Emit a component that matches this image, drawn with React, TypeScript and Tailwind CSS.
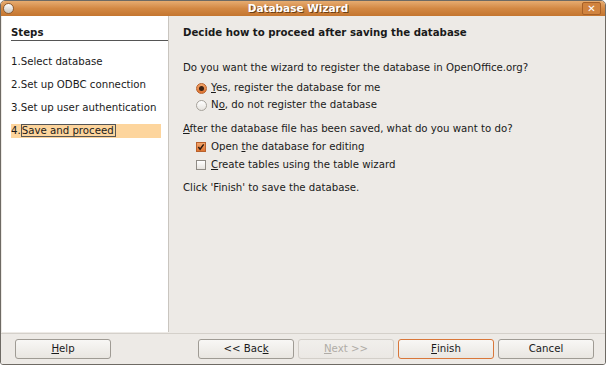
import React from 'react';

const font = { fontFamily: '"DejaVu Sans", sans-serif' };

function Radio({ checked }: { checked?: boolean }) {
    return (
        <span
            className={`inline-flex items-center justify-center w-[11px] h-[11px] rounded-full border shrink-0 ${
                checked
                    ? 'border-[#b8612c] bg-gradient-to-b from-[#f3a56a] to-[#df7430]'
                    : 'border-[#a6a29b] bg-gradient-to-b from-white to-[#e6e3de]'
            }`}
        >
            {checked && <span className="w-[5px] h-[5px] rounded-full bg-[#3b2214]" />}
        </span>
    );
}

function Check({ checked }: { checked?: boolean }) {
    return (
        <span
            className={`inline-flex items-center justify-center w-[10px] h-[10px] border shrink-0 ${
                checked
                    ? 'border-[#b8612c] bg-gradient-to-b from-[#f3a56a] to-[#df7430]'
                    : 'border-[#8f8b85] bg-gradient-to-b from-white to-[#e6e3de]'
            }`}
        >
            {checked && (
                <svg width="8" height="8" viewBox="0 0 9 9">
                    <path d="M1.5 4.5 L3.5 7 L7.5 1.5" stroke="#2b1a10" strokeWidth="1.6" fill="none" />
                </svg>
            )}
        </span>
    );
}

function Btn({
    children,
    className = '',
    disabled,
    focused,
}: {
    children: React.ReactNode;
    className?: string;
    disabled?: boolean;
    focused?: boolean;
}) {
    return (
        <div
            className={`h-[20px] flex items-center justify-center rounded-[3px] border text-[10.2px] bg-gradient-to-b ${
                disabled
                    ? 'border-[#d3cfc9] from-[#f1efec] to-[#ebe8e4] text-[#b0aca6]'
                    : focused
                    ? 'border-[#d9773a] from-[#f8f7f5] to-[#e9e6e1] text-[#1a1a1a]'
                    : 'border-[#9f9b94] from-[#f8f7f5] to-[#e9e6e1] text-[#1a1a1a]'
            } ${className}`}
        >
            {children}
        </div>
    );
}

export default function App() {
    return (
        <div className="w-[606px] h-[365px] bg-white" style={font}>
            <div className="w-[606px] h-[365px] flex flex-col rounded-t-[5px] overflow-hidden border border-[#6e6a64] rounded-b-[3px]">
                {/* title bar */}
                <div className="h-[15px] shrink-0 flex items-center bg-gradient-to-b from-[#e7ac70] via-[#d38843] to-[#c47630] relative">
                    <span className="ml-[2px] w-[11px] h-[11px] rounded-full bg-gradient-to-b from-white to-[#c9c4be] border border-[#8c5d33]" />
                    <span
                        className="flex-1 text-center text-[10.5px] font-bold text-white"
                        style={{ textShadow: '1px 1px 0 #6b3f16' }}
                    >
                        Database Wizard
                    </span>
                    <span className="mr-[4px] w-[19px] h-[13px] flex items-center justify-center rounded-[2px] border border-[#a76027] bg-[#d1833e] text-white text-[10px] font-bold leading-none">
                        ✕
                    </span>
                </div>

                {/* body */}
                <div className="flex flex-1 min-h-0 bg-[#edeae6]">
                    <div className="w-[167px] ml-[1px] bg-white border-r border-[#c9c5bf] flex flex-col text-[10.2px] text-[#1a1a1a] pl-[9px] h-[316px]">
                        <div className="mt-[11px] font-bold border-b border-[#555] pb-[1px] leading-[12px]">Steps</div>
                        <div className="mt-[14px] flex flex-col gap-[9px] leading-[14px]">
                            <div>1.Select database</div>
                            <div>2.Set up ODBC connection</div>
                            <div>3.Set up user authentication</div>
                            <div className="w-[150px] bg-[#fdd59d]">
                                4.<span className="border border-[#555] pr-[1px]">Save and proceed</span>
                            </div>
                        </div>
                    </div>
                    <div className="flex-1 pl-[14px] text-[10.2px] text-[#1a1a1a] leading-[14px]">
                        <div className="mt-[10px] font-bold">Decide how to proceed after saving the database</div>
                        <div className="mt-[21px]">Do you want the wizard to register the database in OpenOffice.org?</div>
                        <div className="mt-[6px] pl-[13px] flex items-center gap-[4px]">
                            <Radio checked />
                            <span>
                                <u>Y</u>es, register the database for me
                            </span>
                        </div>
                        <div className="mt-[3px] pl-[13px] flex items-center gap-[4px]">
                            <Radio />
                            <span>
                                N<u>o</u>, do not register the database
                            </span>
                        </div>
                        <div className="mt-[10px]">
                            <u>A</u>fter the database file has been saved, what do you want to do?
                        </div>
                        <div className="mt-[4px] pl-[13px] flex items-center gap-[5px]">
                            <Check checked />
                            <span>
                                Open <u>t</u>he database for editing
                            </span>
                        </div>
                        <div className="mt-[4px] pl-[13px] flex items-center gap-[5px]">
                            <Check />
                            <span>
                                <u>C</u>reate tables using the table wizard
                            </span>
                        </div>
                        <div className="mt-[9px]">Click 'Finish' to save the database.</div>
                    </div>
                </div>

                {/* footer */}
                <div className="h-[31px] shrink-0 bg-[#edeae6] border-t border-[#d4d0ca] flex items-center pl-[14px] pr-[11px]">
                    <Btn className="w-[96px]">
                        <u>H</u>elp
                    </Btn>
                    <div className="flex-1" />
                    <div className="flex gap-[4px]">
                        <Btn className="w-[96px]">
                            &lt;&lt; Bac<u>k</u>
                        </Btn>
                        <Btn className="w-[96px]" disabled>
                            <u>N</u>ext &gt;&gt;
                        </Btn>
                        <Btn className="w-[96px]" focused>
                            <u>F</u>inish
                        </Btn>
                        <Btn className="w-[96px]">Cancel</Btn>
                    </div>
                </div>
            </div>
        </div>
    );
}
